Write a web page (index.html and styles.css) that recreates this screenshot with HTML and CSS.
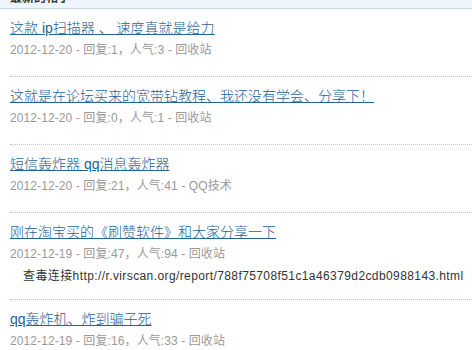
FILE: index.html
```html
<!DOCTYPE html>
<html lang="zh-CN">
<head>
    <meta charset="UTF-8">
    <title>最新的帖子</title>
    <link rel="stylesheet" href="styles.css">
</head>
<body>
    <div class="head">最新的帖子</div>
    <ul class="posts">
        <li class="post">
            <a class="title" href="#">这款 ip扫描器 、 速度真就是给力</a>
            <p class="meta">2012-12-20 - 回复:1，人气:3 - 回收站</p>
        </li>
        <li class="post">
            <a class="title" href="#">这就是在论坛买来的宽带钻教程、我还没有学会、分享下！</a>
            <p class="meta">2012-12-20 - 回复:0，人气:1 - 回收站</p>
        </li>
        <li class="post">
            <a class="title" href="#">短信轰炸器 qq消息轰炸器</a>
            <p class="meta">2012-12-20 - 回复:21，人气:41 - QQ技术</p>
        </li>
        <li class="post">
            <a class="title" href="#">刚在淘宝买的《刷赞软件》和大家分享一下</a>
            <p class="meta">2012-12-19 - 回复:47，人气:94 - 回收站</p>
            <p class="note">查毒连接http://r.virscan.org/report/788f75708f51c1a46379d2cdb0988143.html</p>
        </li>
        <li class="post">
            <a class="title" href="#">qq轰炸机、炸到骗子死</a>
            <p class="meta">2012-12-19 - 回复:16，人气:33 - 回收站</p>
        </li>
    </ul>
</body>
</html>
```

FILE: styles.css
```css
body {
    margin: 0;
    background: #fff;
    font-family: "Liberation Sans", "Noto Sans CJK SC", sans-serif;
    font-size: 12px;
    overflow: hidden;
}
.head {
    margin-top: -10px;
    height: 18px;
    line-height: 16px;
    padding-left: 10px;
    background: #eef5fb;
    border-bottom: 1px solid #c8d8e4;
    font-weight: bold;
    color: #333;
}
.posts {
    list-style: none;
    margin: 0 0 0 10px;
    padding: 0;
}
.post {
    padding: 8px 0 15px;
    border-top: 1px dotted #c4c4c4;
}
.post:first-child {
    border-top: 0;
}
.title {
    display: block;
    width: fit-content;
    font-size: 14px;
    font-weight: 300;
    line-height: 22px;
    color: #23629a;
    text-decoration: underline;
}
.meta {
    margin: 0;
    line-height: 22px;
    color: #999;
    letter-spacing: 0.1px;
}
.note {
    margin: 0;
    padding: 3px 0 0 13px;
    line-height: 16px;
    color: #333;
    letter-spacing: 0.4px;
}
```
